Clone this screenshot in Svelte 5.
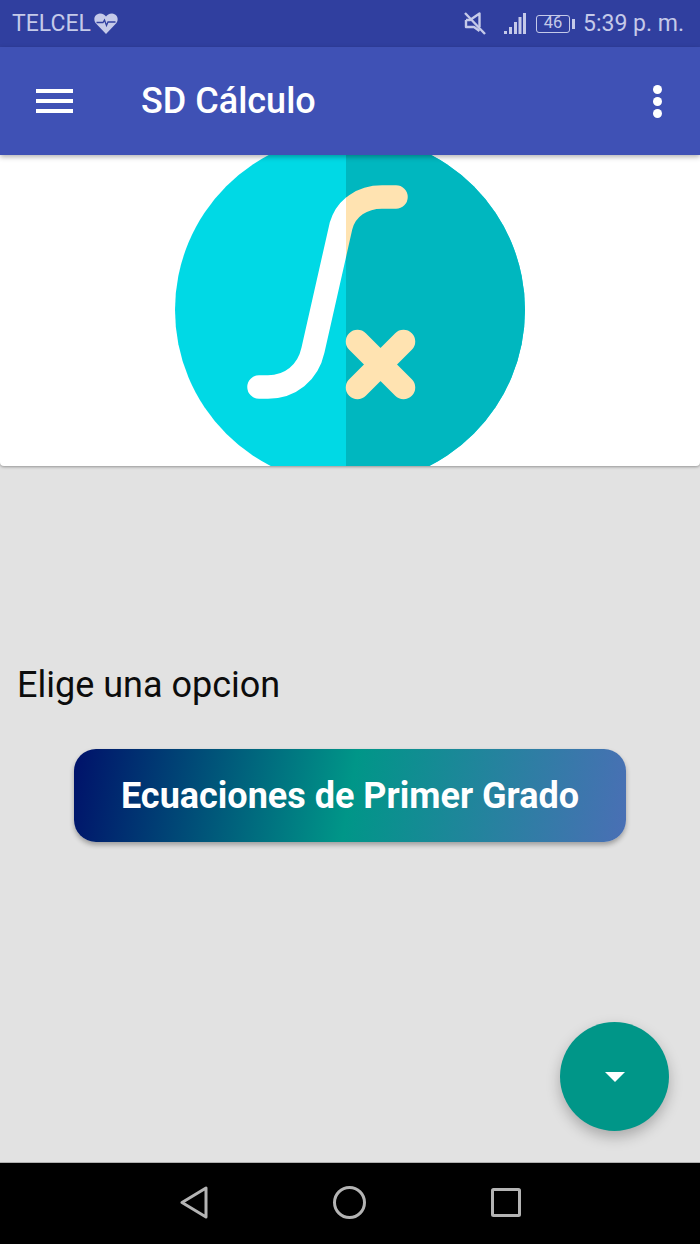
<script>
  const title = 'SD Cálculo';
</script>

<div class="screen">
  <header class="status">
    <div class="carrier">
      <span>TELCEL</span>
      <svg class="heart" width="24" height="21" viewBox="0 0 24 21">
        <path d="M12 21 L2 10.5 C-1 7 0 1 6 0.5 C9 0.5 11 2 12 3.5 C13 2 15 0.5 18 0.5 C24 1 25 7 22 10.5 Z" fill="#c5cae9"/>
        <path d="M2.5 9.5 H9 L10.5 7 L12.5 12.5 L14 9 H21.5" fill="none" stroke="#303f9f" stroke-width="1.3"/>
      </svg>
    </div>
    <div class="system">
      <svg class="mute" width="22" height="23" viewBox="0 0 22 23" fill="none" stroke="#c5cae9" stroke-width="2.4">
        <path d="M2 8 H6 L15.5 1.5 V15 M15.5 19 L10 15 H2 V8" stroke-linejoin="round"/>
        <path d="M1 1 L21 22"/>
      </svg>
      <svg class="signal" width="22" height="21" viewBox="0 0 22 21" fill="#c5cae9">
        <rect x="0" y="18" width="3" height="3"/>
        <rect x="5" y="14" width="3" height="7"/>
        <rect x="10" y="9" width="3" height="12"/>
        <rect x="14.5" y="4" width="3" height="17"/>
        <rect x="19" y="0" width="3" height="21"/>
      </svg>
      <div class="battery"><span class="level">46</span><i class="cap"></i></div>
      <span class="time">5:39 p. m.</span>
    </div>
  </header>

  <div class="toolbar">
    <div class="burger"><i></i><i></i><i></i></div>
    <h1>{title}</h1>
    <div class="dots"><i></i><i></i><i></i></div>
  </div>

  <section class="hero">
    <svg width="700" height="311" viewBox="0 155 700 311">
      <defs>
        <clipPath id="left"><rect x="0" y="155" width="346" height="311"/></clipPath>
        <clipPath id="right"><rect x="346" y="155" width="354" height="311"/></clipPath>
      </defs>
      <circle cx="350" cy="310" r="175" fill="#00d9e5"/>
      <circle cx="350" cy="310" r="175" fill="#00b7bf" clip-path="url(#right)"/>
      <path id="curve" d="M259 387 H268 C290 387 308 373 313 350 L341 226 C346 208 362 197 382 197 H396" fill="none" stroke="#fff" stroke-width="23.5" stroke-linecap="round" clip-path="url(#left)"/>
      <path d="M259 387 H268 C290 387 308 373 313 350 L341 226 C346 208 362 197 382 197 H396" fill="none" stroke="#ffe3b1" stroke-width="23.5" stroke-linecap="round" clip-path="url(#right)"/>
      <path d="M357.5 341.5 L403.5 387.5 M403.5 341.5 L357.5 387.5" fill="none" stroke="#ffe3b1" stroke-width="23.5" stroke-linecap="round"/>
    </svg>
  </section>

  <main class="content">
    <p class="prompt">Elige una opcion</p>
    <button class="equations">Ecuaciones de Primer Grado</button>
    <button class="fab" aria-label="Más">
      <svg width="20" height="10" viewBox="0 0 20 10"><path d="M0 0 H20 L10 10 Z" fill="#fff"/></svg>
    </button>
  </main>

  <nav class="nav">
    <svg width="28" height="33" viewBox="0 0 28 33" fill="none" stroke="#b4b4b4" stroke-width="3" stroke-linejoin="round"><path d="M26 2 V31 L2 16.5 Z"/></svg>
    <svg width="33" height="33" viewBox="0 0 33 33" fill="none" stroke="#b4b4b4" stroke-width="3"><circle cx="16.5" cy="16.5" r="15"/></svg>
    <svg width="30" height="29" viewBox="0 0 30 29" fill="none" stroke="#b4b4b4" stroke-width="3" stroke-linejoin="round"><rect x="1.5" y="1.5" width="27" height="26" rx="1"/></svg>
  </nav>
</div>

<style>
  :global(body) { margin: 0; }
  .screen {
    width: 700px;
    height: 1244px;
    display: flex;
    flex-direction: column;
    background: #e2e2e2;
    font-family: Roboto, "Liberation Sans", sans-serif;
    overflow: hidden;
  }
  .status {
    height: 47px;
    flex: none;
    background: #303f9f;
    color: #c5cae9;
    display: flex;
    align-items: center;
    justify-content: space-between;
    padding: 0 16px 0 12px;
    box-sizing: border-box;
    font-size: 23px;
  }
  .carrier, .system { display: flex; align-items: center; }
  .carrier { gap: 3px; }
  .mute { margin-right: 18px; }
  .signal { margin-right: 10px; }
  .battery {
    width: 34px;
    height: 18px;
    border: 1.5px solid #c5cae9;
    border-radius: 3px;
    box-sizing: border-box;
    position: relative;
    display: flex;
    align-items: center;
    justify-content: center;
    margin-right: 13px;
  }
  .level { font-size: 16.5px; line-height: 1; }
  .cap {
    position: absolute;
    left: 35px;
    top: 3px;
    width: 3px;
    height: 10px;
    background: #c5cae9;
  }
  .toolbar {
    height: 108px;
    flex: none;
    background: #3f51b5;
    display: flex;
    align-items: center;
    padding: 0 38px 0 36px;
    box-sizing: border-box;
    box-shadow: 0 2px 5px rgba(0,0,0,.3);
    position: relative;
    z-index: 2;
  }
  .burger { display: flex; flex-direction: column; gap: 5.5px; width: 37px; margin-right: 68px; }
  .burger i { display: block; height: 4.5px; background: #fff; }
  h1 {
    margin: 0;
    flex: 1;
    color: #fff;
    font-size: 36px;
    font-weight: 500;
  }
  .dots { display: flex; flex-direction: column; gap: 3px; }
  .dots i { display: block; width: 9px; height: 9px; border-radius: 50%; background: #fff; }
  .hero {
    height: 311px;
    flex: none;
    background: #fff;
    box-shadow: 0 1px 3px rgba(0,0,0,.35);
    border-radius: 0 0 4px 4px;
    overflow: hidden;
    position: relative;
    z-index: 1;
  }
  .hero svg { display: block; }
  .content {
    flex: 1;
    position: relative;
    padding-top: 196px;
    display: flex;
    flex-direction: column;
  }
  .prompt {
    margin: 0 0 41px 17px;
    font-size: 36px;
    line-height: 46px;
    color: #0c0c0c;
  }
  .equations {
    align-self: center;
    width: 552px;
    height: 93px;
    border: 0;
    border-radius: 22px;
    background: linear-gradient(100deg, #00116a 0%, #009688 50%, #4a6fb5 100%);
    color: #fff;
    font-family: inherit;
    font-size: 36px;
    font-weight: 700;
    padding: 0;
    box-shadow: 0 3px 5px rgba(0,0,0,.3);
  }
  .fab {
    position: absolute;
    left: 560px;
    top: 556px;
    width: 109px;
    height: 109px;
    border-radius: 50%;
    border: 0;
    padding: 0;
    background: #009688;
    box-shadow: 0 6px 14px rgba(0,0,0,.25);
    display: flex;
    align-items: center;
    justify-content: center;
  }
  .nav {
    height: 82px;
    flex: none;
    background: #000;
    border-top: 1px solid #b0b0b0;
    box-sizing: border-box;
    display: flex;
    align-items: center;
    padding: 0 0 2px 180px;
    gap: 125px;
  }
</style>
